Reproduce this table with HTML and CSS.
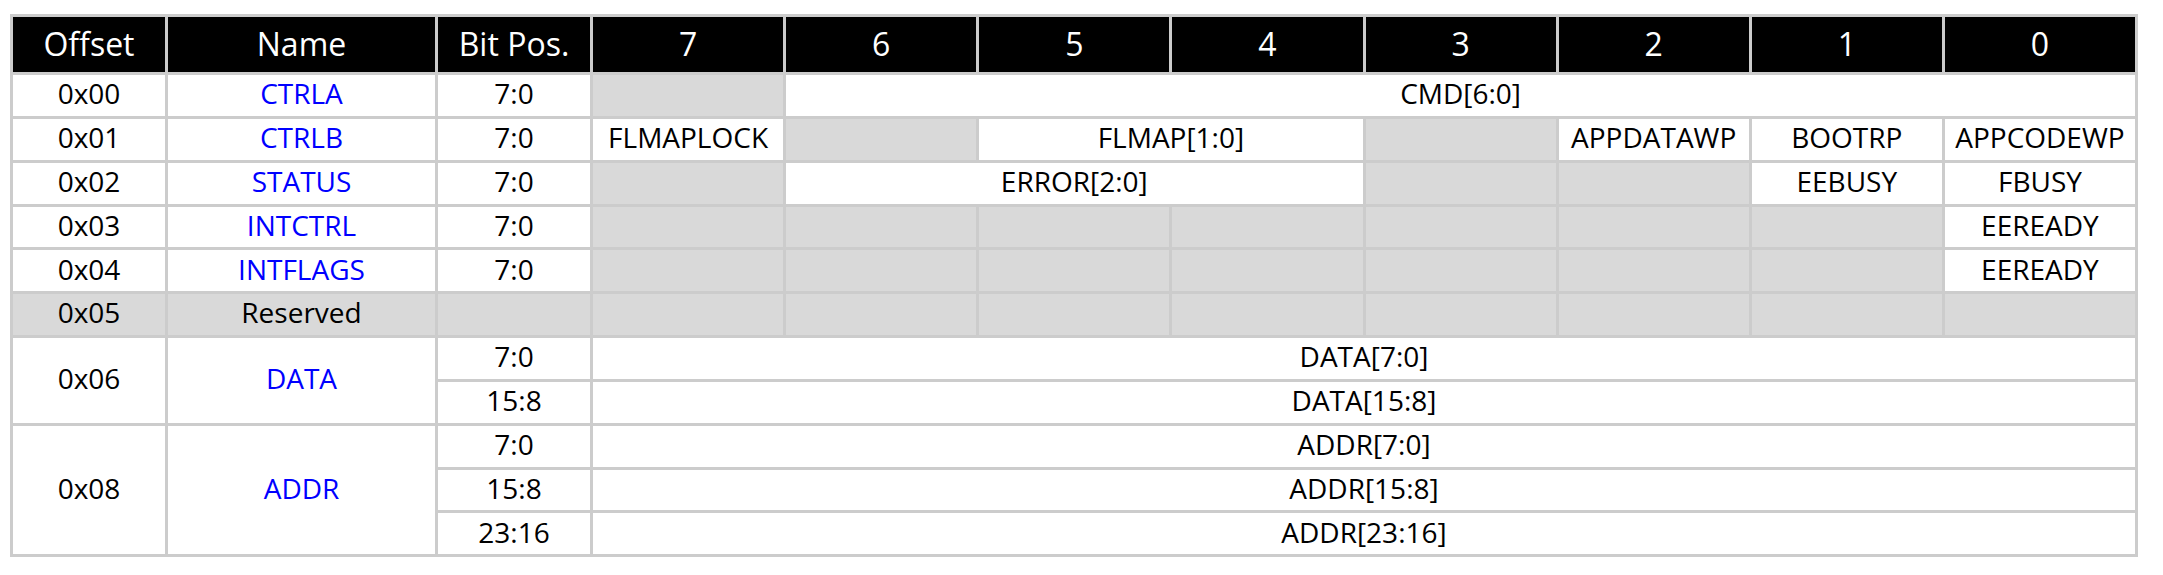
FILE: index.html
```html
<!DOCTYPE html>
<html>
<head>
<meta charset="utf-8">
<link rel="stylesheet" href="styles.css">
</head>
<body>
<div class="regs">
  <div class="c h">Offset</div>
  <div class="c h">Name</div>
  <div class="c h">Bit Pos.</div>
  <div class="c h">7</div>
  <div class="c h">6</div>
  <div class="c h">5</div>
  <div class="c h">4</div>
  <div class="c h">3</div>
  <div class="c h">2</div>
  <div class="c h">1</div>
  <div class="c h">0</div>

  <div class="c">0x00</div>
  <div class="c link">CTRLA</div>
  <div class="c">7:0</div>
  <div class="c g"></div>
  <div class="c s7">CMD[6:0]</div>

  <div class="c">0x01</div>
  <div class="c link">CTRLB</div>
  <div class="c">7:0</div>
  <div class="c">FLMAPLOCK</div>
  <div class="c g"></div>
  <div class="c s2">FLMAP[1:0]</div>
  <div class="c g"></div>
  <div class="c">APPDATAWP</div>
  <div class="c">BOOTRP</div>
  <div class="c">APPCODEWP</div>

  <div class="c">0x02</div>
  <div class="c link">STATUS</div>
  <div class="c">7:0</div>
  <div class="c g"></div>
  <div class="c s3">ERROR[2:0]</div>
  <div class="c g"></div>
  <div class="c g"></div>
  <div class="c">EEBUSY</div>
  <div class="c">FBUSY</div>

  <div class="c">0x03</div>
  <div class="c link">INTCTRL</div>
  <div class="c">7:0</div>
  <div class="c g"></div>
  <div class="c g"></div>
  <div class="c g"></div>
  <div class="c g"></div>
  <div class="c g"></div>
  <div class="c g"></div>
  <div class="c g"></div>
  <div class="c">EEREADY</div>

  <div class="c">0x04</div>
  <div class="c link">INTFLAGS</div>
  <div class="c">7:0</div>
  <div class="c g"></div>
  <div class="c g"></div>
  <div class="c g"></div>
  <div class="c g"></div>
  <div class="c g"></div>
  <div class="c g"></div>
  <div class="c g"></div>
  <div class="c">EEREADY</div>

  <div class="c g">0x05</div>
  <div class="c g">Reserved</div>
  <div class="c g"></div>
  <div class="c g"></div>
  <div class="c g"></div>
  <div class="c g"></div>
  <div class="c g"></div>
  <div class="c g"></div>
  <div class="c g"></div>
  <div class="c g"></div>
  <div class="c g"></div>

  <div class="c r2">0x06</div>
  <div class="c link r2">DATA</div>
  <div class="c">7:0</div>
  <div class="c s8">DATA[7:0]</div>
  <div class="c">15:8</div>
  <div class="c s8">DATA[15:8]</div>

  <div class="c r3">0x08</div>
  <div class="c link r3">ADDR</div>
  <div class="c">7:0</div>
  <div class="c s8">ADDR[7:0]</div>
  <div class="c">15:8</div>
  <div class="c s8">ADDR[15:8]</div>
  <div class="c">23:16</div>
  <div class="c s8">ADDR[23:16]</div>
</div>
</body>
</html>
```
FILE: styles.css
```css
html, body {
  margin: 0;
  padding: 0;
  background: #fff;
}

body {
  font-family: "Open Sans", "Noto Sans", "DejaVu Sans", sans-serif;
  color: #000;
}

.regs {
  box-sizing: border-box;
  width: 2128px;
  margin: 14px 0 0 10px;
  padding: 3px;
  background: #cccccc;
  display: grid;
  gap: 3px;
  grid-template-columns: 152px 267px 152px repeat(8, 1fr);
  grid-template-rows: 55px repeat(11, 40.85px);
}

.c {
  background: #fff;
  display: flex;
  align-items: center;
  justify-content: center;
  font-size: 28px;
  line-height: 1.2;
  padding-bottom: 3px;
  box-sizing: border-box;
  white-space: nowrap;
  overflow: hidden;
}

.h {
  background: #000;
  color: #fff;
  font-size: 32px;
  padding-bottom: 0;
}

.g {
  background: #d9d9d9;
}

.link {
  color: #0000ff;
}

.s2 { grid-column: span 2; }
.s3 { grid-column: span 3; }
.s7 { grid-column: span 7; }
.s8 { grid-column: span 8; }
.r2 { grid-row: span 2; }
.r3 { grid-row: span 3; }
```
